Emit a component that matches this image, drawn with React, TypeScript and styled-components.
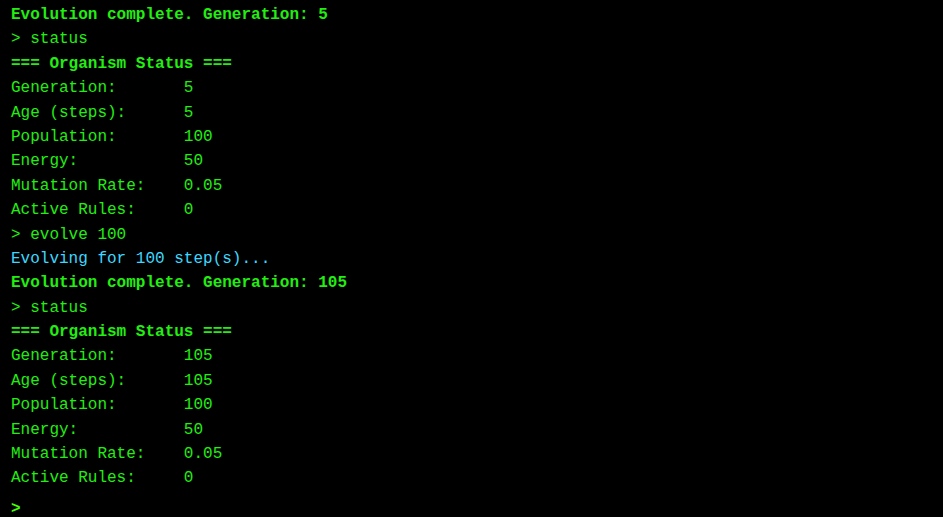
import React from "react";
import styled, { createGlobalStyle } from "styled-components";

const Global = createGlobalStyle`
  html, body { margin: 0; padding: 0; background: #000; }
  body { font-family: "Liberation Mono", "Courier New", monospace; }
`;

const Terminal = styled.div`
  width: 943px;
  height: 517px;
  box-sizing: border-box;
  padding: 3px 11px 0;
  background: #000;
  overflow: hidden;
  display: flex;
  flex-direction: column;
`;

const Output = styled.div`
  display: flex;
  flex-direction: column;
`;

type Kind = "normal" | "bold" | "info";

const Line = styled.div<{ $kind?: Kind }>`
  font-size: 16px;
  line-height: 24.4px;
  height: 24.4px;
  white-space: pre;
  color: ${(p) => (p.$kind === "info" ? "#3cd8ff" : "#22ee11")};
  font-weight: ${(p) => (p.$kind === "bold" ? 700 : 400)};
`;

const InputRow = styled.div`
  margin-top: 9px;
  display: flex;
  align-items: center;
  height: 24.4px;
  font-size: 16px;
`;

const Prompt = styled.span`
  color: #44ff00;
  font-weight: 700;
  margin-right: 8px;
`;

const Input = styled.input`
  flex: 1;
  background: transparent;
  border: none;
  outline: none;
  color: #22ee11;
  font: inherit;
  font-family: "Liberation Mono", monospace;
  padding: 0;
`;

const pad = (label: string, value: string) => label.padEnd(18, " ") + value;

const status = (gen: string, age: string): [Kind, string][] => [
  ["bold", "=== Organism Status ==="],
  ["normal", pad("Generation:", gen)],
  ["normal", pad("Age (steps):", age)],
  ["normal", pad("Population:", "100")],
  ["normal", pad("Energy:", "50")],
  ["normal", pad("Mutation Rate:", "0.05")],
  ["normal", pad("Active Rules:", "0")],
];

const lines: [Kind, string][] = [
  ["bold", "Evolution complete. Generation: 5"],
  ["normal", "> status"],
  ...status("5", "5"),
  ["normal", "> evolve 100"],
  ["info", "Evolving for 100 step(s)..."],
  ["bold", "Evolution complete. Generation: 105"],
  ["normal", "> status"],
  ...status("105", "105"),
];

export default function App() {
  return (
    <>
      <Global />
      <Terminal>
        <Output>
          {lines.map(([k, t], i) => (
            <Line key={i} $kind={k}>
              {t}
            </Line>
          ))}
        </Output>
        <InputRow>
          <Prompt>&gt;</Prompt>
          <Input aria-label="command" />
        </InputRow>
      </Terminal>
    </>
  );
}
